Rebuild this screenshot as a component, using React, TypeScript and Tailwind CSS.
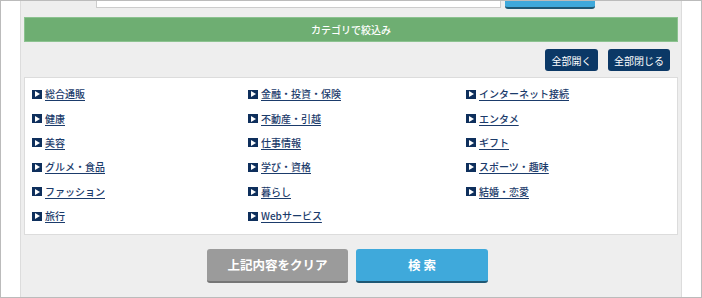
const categories: string[][] = [
  ["総合通販", "金融・投資・保険", "インターネット接続"],
  ["健康", "不動産・引越", "エンタメ"],
  ["美容", "仕事情報", "ギフト"],
  ["グルメ・食品", "学び・資格", "スポーツ・趣味"],
  ["ファッション", "暮らし", "結婚・恋愛"],
  ["旅行", "Webサービス", ""],
];

const font = "font-['Meiryo','Noto_Sans_CJK_JP',sans-serif]";

const Arrow = () => (
  <span className="flex h-[9px] w-[10px] shrink-0 items-center justify-center bg-[#0e2f5c]">
    <svg width="5" height="6" viewBox="0 0 5 6">
      <path d="M0 0 L5 3 L0 6 Z" fill="#fff" />
    </svg>
  </span>
);

const CategoryLink = ({ label }: { label: string }) => (
  <div className="flex h-[24.4px] items-center gap-[3px]">
    {label && <Arrow />}
    {label && (
      <a href="#" className="text-[10px] font-medium leading-none text-[#1b3b6b] underline underline-offset-[1.5px]">
        {label}
      </a>
    )}
  </div>
);

export default function App() {
  return (
    <div className={`flex h-[298px] w-[702px] overflow-hidden border border-[#bbb] bg-white ${font}`}>
      <div className="w-[19px] shrink-0" />
      <div className="flex w-[662px] shrink-0 flex-col border-x border-[#dcdcdc] bg-[#eeeeee] px-[3px]">
        {/* 検索フォーム（上部） */}
        <div className="flex h-[8px] items-end overflow-hidden">
          <div className="mb-[1px] ml-[72px] h-[30px] w-[405px] shrink-0 border border-[#ccc] bg-white" />
          <div className="ml-[4px] h-[30px] w-[90px] shrink-0 rounded-[3px] border-b-2 border-[#1f5874] bg-[#3fa9db]" />
        </div>

        <div className="mt-[8px] flex h-[25px] items-center justify-center border border-[#8cc290] bg-[#6eae72] text-[10px] font-medium text-white">
          カテゴリで絞込み
        </div>

        <div className="mt-[7px] flex h-[22px] justify-end gap-[10px] pr-[8px]">
          <button className="h-[22px] w-[53px] rounded-[3px] bg-[#0b3866] text-[10px] text-white">全部開く</button>
          <button className="h-[22px] w-[62px] rounded-[3px] bg-[#0b3866] text-[10px] text-white">全部閉じる</button>
        </div>

        {/* カテゴリ一覧 */}
        <div className="mt-[6px] h-[158px] border border-[#dcdcdc] bg-white pl-[7px] pt-[4px]">
          {categories.map((row, i) => (
            <div key={i} className="grid grid-cols-[216px_218px_1fr]">
              {row.map((label, j) => (
                <CategoryLink key={j} label={label} />
              ))}
            </div>
          ))}
        </div>

        <div className="mt-[14px] flex justify-center gap-[8px] pr-[7px]">
          <button className="h-[34px] w-[141px] rounded-[3px] border-b-2 border-[#767676] bg-[#9b9b9b] text-[12.5px] font-bold text-white">
            上記内容をクリア
          </button>
          <button className="h-[34px] w-[132px] rounded-[3px] border-b-2 border-[#1f5874] bg-[#3fa9db] text-[12.5px] font-bold text-white">
            検 索
          </button>
        </div>
      </div>
      <div className="flex-1" />
    </div>
  );
}
